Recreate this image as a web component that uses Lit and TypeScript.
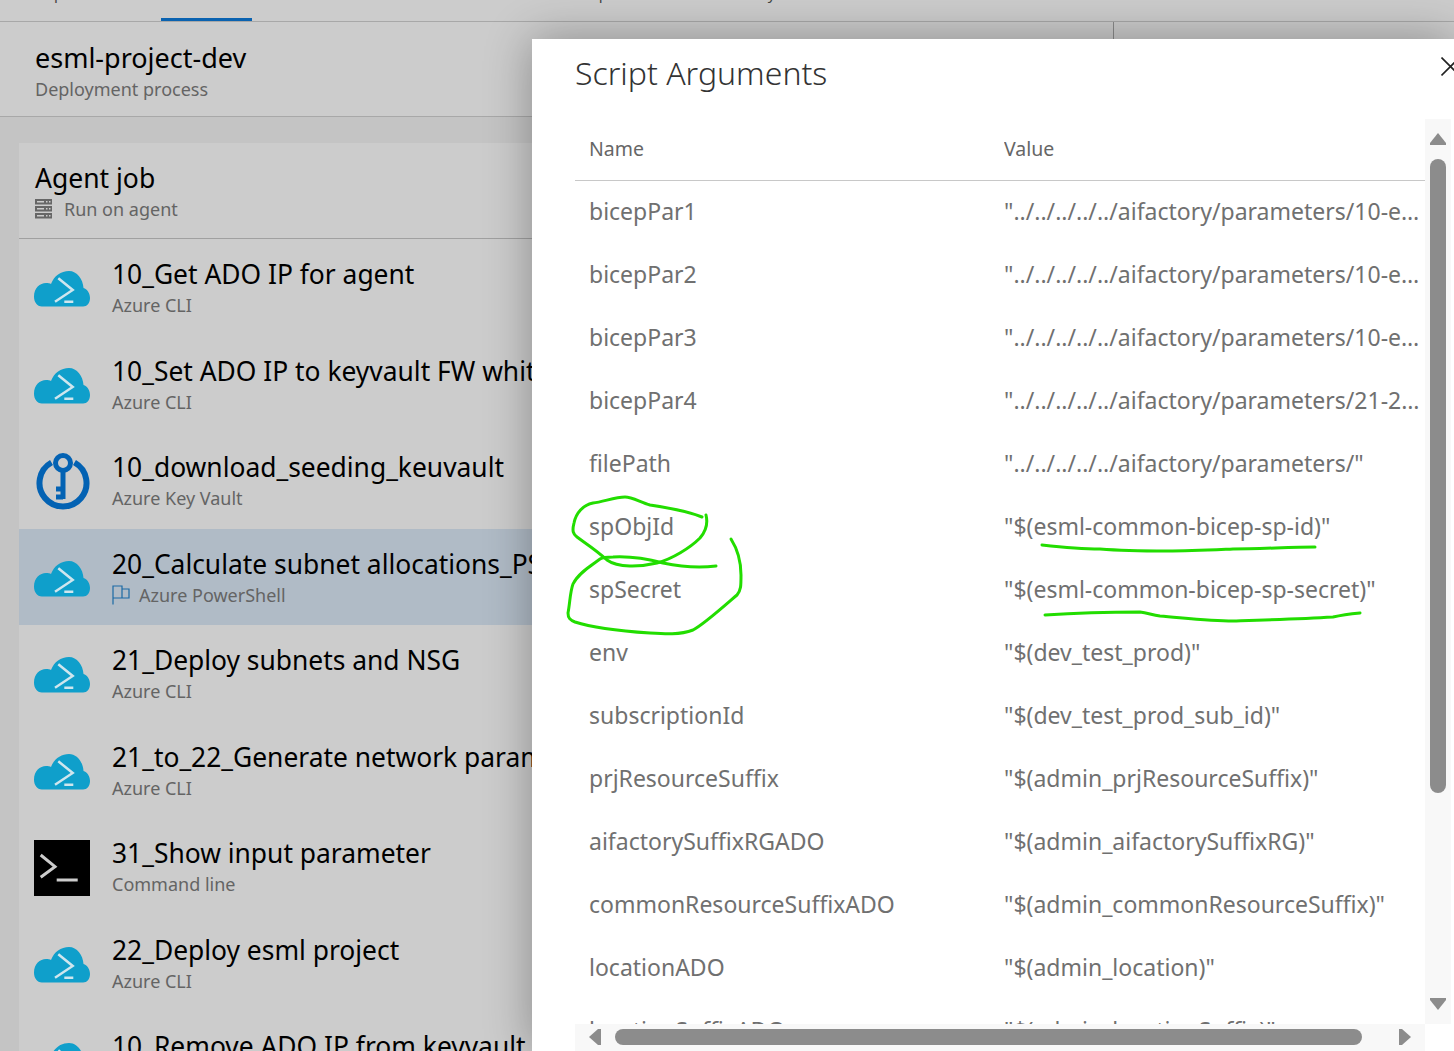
import { LitElement, css, html, svg } from "lit";
import { customElement } from "lit/decorators.js";

type Step = { name: string; kind: string; icon: "cloud" | "key" | "cmd"; selected?: boolean; flag?: boolean };

const steps: Step[] = [
  { name: "10_Get ADO IP for agent", kind: "Azure CLI", icon: "cloud" },
  { name: "10_Set ADO IP to keyvault FW whitelist", kind: "Azure CLI", icon: "cloud" },
  { name: "10_download_seeding_keuvault", kind: "Azure Key Vault", icon: "key" },
  { name: "20_Calculate subnet allocations_PS", kind: "Azure PowerShell", icon: "cloud", selected: true, flag: true },
  { name: "21_Deploy subnets and NSG", kind: "Azure CLI", icon: "cloud" },
  { name: "21_to_22_Generate network parameters", kind: "Azure CLI", icon: "cloud" },
  { name: "31_Show input parameter", kind: "Command line", icon: "cmd" },
  { name: "22_Deploy esml project", kind: "Azure CLI", icon: "cloud" },
  { name: "10_Remove ADO IP from keyvault", kind: "Azure CLI", icon: "cloud" },
];

const args: [string, string][] = [
  ["bicepPar1", '"../../../../../aifactory/parameters/10-esml-globals-1.json"'],
  ["bicepPar2", '"../../../../../aifactory/parameters/10-esml-globals-2.json"'],
  ["bicepPar3", '"../../../../../aifactory/parameters/10-esml-globals-3.json"'],
  ["bicepPar4", '"../../../../../aifactory/parameters/21-22-esml-prj-parameters.json"'],
  ["filePath", '"../../../../../aifactory/parameters/"'],
  ["spObjId", '"$(esml-common-bicep-sp-id)"'],
  ["spSecret", '"$(esml-common-bicep-sp-secret)"'],
  ["env", '"$(dev_test_prod)"'],
  ["subscriptionId", '"$(dev_test_prod_sub_id)"'],
  ["prjResourceSuffix", '"$(admin_prjResourceSuffix)"'],
  ["aifactorySuffixRGADO", '"$(admin_aifactorySuffixRG)"'],
  ["commonResourceSuffixADO", '"$(admin_commonResourceSuffix)"'],
  ["locationADO", '"$(admin_location)"'],
  ["locationSuffixADO", '"$(admin_locationSuffix)"'],
];

const cloud = html`<svg class="ico" width="56" height="36" viewBox="0 0 56 36">
  <path fill="#0f9fcb" d="M8 35.500C3 35.500 0 31 0 25.500C0 17 6 12 12 12C14 12 16 12 17 13C20 5 27 0 35 0C43 0 49 8 49.500 17C53 18 56 22 56 27C56 32 53 35.500 49 35.500Z" />
  <path fill="none" stroke="#cfe6ee" stroke-width="2.500" d="M24.300 7.300L38.700 19L21 30.700M30.300 30.700h9" />
</svg>`;

const key = html`<svg class="ico" width="56" height="58" viewBox="-3 0 56 58">
  <path fill="none" stroke="#0362b3" stroke-width="6" d="M14.500 9.500A23.500 23.500 0 1 0 37.500 9.500" />
  <circle cx="26" cy="10" r="7.500" fill="none" stroke="#0362b3" stroke-width="5" />
  <path fill="none" stroke="#0362b3" stroke-width="5" d="M26 17V46M19 36h7M19 44h7" />
</svg>`;

const cmd = html`<svg class="ico" width="56" height="56" viewBox="0 0 56 56">
  <rect width="56" height="56" fill="#000" />
  <path fill="none" stroke="#ccc" stroke-width="3" d="M6.700 15L21 26.700L6.700 37.300M22.700 40h21" />
</svg>`;

const icons = { cloud, key, cmd };

const flag = html`<svg class="flag" width="18" height="20" viewBox="0 0 18 20">
  <path fill="none" stroke="#1b6aa5" stroke-width="1.200" d="M1 19.500V1h9V13H1M10 4h7v9h-7" />
</svg>`;

const serverIcon = html`<svg class="server" width="17" height="20" viewBox="0 0 17 20">
  <path fill="#666" d="M0 0h17v5.500H0zM0 7h17v5.500H0zM0 14h17v5.500H0z" />
  <path fill="#ccc" d="M2 2h7v1.500H2zM11 2h1.500v1.500H11zM14 2h1.500v1.500H14zM2 9h7v1.500H2zM11 9h1.500v1.500H11zM14 9h1.500v1.500H14zM2 16h7v1.500H2zM11 16h1.500v1.500H11zM14 16h1.500v1.500H14z" />
</svg>`;

// hand drawn marks on top of the screenshot, page coordinates
const marks = svg`
  <path d="M702 517C690 512 670 508 650 505C640 502 632 497 625 497C615 497 603 502 593 503C583 505 576 513 574 523C572 531 573 534 577 537C585 543 595 549 607 560C618 568 640 567 657 563C672 559 690 548 700 538C706 531 708 523 706 515" />
  <path d="M716 566C700 568 682 567 663 563C648 559 632 556 613 557C607 557 603 557 600 559C592 565 578 573 573 584C570 592 570 603 568 613C568 618 570 620 575 622C590 627 620 631 650 633C665 634 680 635 693 630C703 625 722 608 737 595C741 590 741 586 741 575C741 560 738 550 731 539" />
  <path d="M1042 545C1060 547 1080 549 1100 549C1125 551 1145 551 1167 551C1190 551 1210 550 1233 549C1260 549 1290 547 1315 547" />
  <path d="M1045 615C1075 613 1110 612 1140 612C1148 613 1152 615 1160 616C1185 618 1210 621 1233 621C1265 620 1300 619 1333 617C1342 615 1350 614 1360 613" />
`;

@customElement("app-root")
export class AppRoot extends LitElement {
  static styles = css`
    :host {
      display: block;
      position: relative;
      height: 1051px;
      overflow: hidden;
      background: #c4c4c4;
      font-family: "Noto Sans", "Open Sans", sans-serif;
    }

    .tabs {
      height: 21px;
      background: #cccccc;
      border-bottom: 1px solid #a8a8a8;
      overflow: hidden;
      display: flex;
      font-size: 15px;
      color: #444;
    }
    .tab {
      margin-top: -17px;
      line-height: 20px;
      height: 38px;
      box-sizing: border-box;
      white-space: nowrap;
    }
    .tab-pipeline { margin-left: 41px; width: 120px; }
    .tab-tasks { width: 91px; text-align: center; border-bottom: 3px solid #0a62b0; }
    .tab-variables { width: 335px; }
    .tab-options { width: 138px; }

    .head {
      height: 94px;
      background: #cccccc;
      border-bottom: 1px solid #a8a8a8;
      display: flex;
    }
    .head-text {
      width: 1113px;
      box-sizing: border-box;
      padding: 18px 0 0 35px;
    }
    .split {
      width: 1px;
      height: 18px;
      background: #8a8a8a;
    }
    .head h1 {
      margin: 0 0 1px;
      font-size: 27px;
      line-height: 36px;
      font-weight: 400;
      color: #000;
    }
    .sub {
      font-size: 18px;
      line-height: 24px;
      color: #646464;
    }

    .content {
      padding: 26px 0 0 19px;
    }
    .card {
      background: #cccccc;
    }
    .job {
      height: 96px;
      box-sizing: border-box;
      padding: 17px 16px 0;
      border-bottom: 1px solid #a0a0a0;
    }
    .job h2 {
      margin: 0 0 1px;
      font-size: 26.500px;
      line-height: 36px;
      font-weight: 400;
      color: #000;
    }
    .job .meta {
      display: flex;
      align-items: center;
      gap: 12px;
    }
    .step {
      height: 96.500px;
      box-sizing: border-box;
      display: flex;
      align-items: center;
      padding-left: 15px;
      white-space: nowrap;
    }
    .step.selected {
      background: #b0bbc6;
    }
    .step-icon {
      width: 56px;
      flex: none;
      display: flex;
      justify-content: center;
      margin: 4px 22px 0 0;
    }
    .ico {
      display: block;
    }
    .step-name {
      font-size: 26.400px;
      line-height: 36px;
      color: #000;
      margin: -1px 0 1px;
    }
    .step-kind {
      display: flex;
      align-items: center;
      gap: 9px;
    }

    .panel {
      position: absolute;
      left: 532px;
      top: 39px;
      right: 0;
      bottom: 0;
      background: #fff;
      box-shadow: 0 0 44px rgba(0, 0, 0, 0.32);
    }
    .panel h3 {
      margin: 0;
      padding: 12px 0 0 43px;
      height: 80px;
      box-sizing: border-box;
      font-size: 32px;
      line-height: 44px;
      font-weight: 300;
      color: #333;
    }
    .close {
      position: absolute;
      left: 909px;
      top: 18px;
    }

    .grid-wrap {
      margin-left: 43px;
      display: grid;
      grid-template-columns: 850px 26px;
      grid-template-rows: 905px 27px;
    }
    .table {
      overflow: hidden;
    }
    .row {
      height: 63px;
      box-sizing: border-box;
      display: grid;
      grid-template-columns: 415px 1fr;
      align-items: center;
      padding: 0 0 4px 14px;
      font-size: 23px;
      color: #707070;
    }
    .row.header {
      height: 62px;
      padding-bottom: 2px;
      border-bottom: 1px solid #c8c8c8;
      font-size: 19.500px;
      color: #666;
    }
    .row span {
      white-space: nowrap;
      overflow: hidden;
      text-overflow: ellipsis;
    }

    .vbar {
      background: #f8f8f8;
      display: flex;
      flex-direction: column;
      align-items: center;
    }
    .vthumb {
      width: 16px;
      height: 634px;
      border-radius: 8px;
      background: #8c8c8c;
      margin: 14px 0 205px;
      flex: none;
    }
    .hbar {
      background: #f8f8f8;
      display: flex;
      align-items: flex-start;
      padding: 5px 0 0 14px;
    }
    .hthumb {
      width: 747px;
      height: 16px;
      border-radius: 8px;
      background: #8c8c8c;
      margin: 0 37px 0 14px;
      flex: none;
    }
    .arrow {
      flex: none;
      display: block;
      fill: #8c8c8c;
    }
    .arrow.up { margin-top: 14px; }

    .marks {
      position: absolute;
      left: 0;
      top: 0;
      pointer-events: none;
    }
    .marks path {
      fill: none;
      stroke: #22dd00;
      stroke-width: 3;
      stroke-linecap: round;
      stroke-linejoin: round;
    }
  `;

  render() {
    return html`
      <div class="tabs">
        <span class="tab tab-pipeline">Pipeline</span>
        <span class="tab tab-tasks">Tasks</span>
        <span class="tab tab-variables">Variables&nbsp;&nbsp;&nbsp;&nbsp;Retention</span>
        <span class="tab tab-options">Options</span>
        <span class="tab">History</span>
      </div>
      <div class="head">
        <div class="head-text">
          <h1>esml-project-dev</h1>
          <div class="sub">Deployment process</div>
        </div>
        <div class="split"></div>
      </div>
      <div class="content">
        <div class="card">
          <div class="job">
            <h2>Agent job</h2>
            <div class="sub meta">${serverIcon}<span>Run on agent</span></div>
          </div>
          ${steps.map(
            (s) => html`
              <div class="step ${s.selected ? "selected" : ""}">
                <div class="step-icon">${icons[s.icon]}</div>
                <div>
                  <div class="step-name">${s.name}</div>
                  <div class="sub step-kind">${s.flag ? flag : ""}<span>${s.kind}</span></div>
                </div>
              </div>
            `,
          )}
        </div>
      </div>
      <div class="panel">
        <h3>Script Arguments</h3>
        <svg class="close" width="24" height="24" viewBox="0 0 24 24">
          <path fill="none" stroke="#222" stroke-width="1.600" d="M.5 .5l18 18M18.500 .5L.5 18.500" />
        </svg>
        <div class="grid-wrap">
          <div class="table">
            <div class="row header"><span>Name</span><span>Value</span></div>
            ${args.map(([n, v]) => html`<div class="row"><span>${n}</span><span>${v}</span></div>`)}
          </div>
          <div class="vbar">
            <svg class="arrow up" width="16" height="12" viewBox="0 0 16 12"><path d="M8 0l8 10v2H0v-2z" /></svg>
            <div class="vthumb"></div>
            <svg class="arrow" width="16" height="12" viewBox="0 0 16 12"><path d="M0 0h16v2L8 12 0 2z" /></svg>
          </div>
          <div class="hbar">
            <svg class="arrow" width="12" height="16" viewBox="0 0 12 16"><path d="M12 0v16H9L0 8l9-8z" /></svg>
            <div class="hthumb"></div>
            <svg class="arrow" width="12" height="16" viewBox="0 0 12 16"><path d="M0 0v16h3l9-8-9-8z" /></svg>
          </div>
        </div>
      </div>
      <svg class="marks" width="1454" height="1051" viewBox="0 0 1454 1051">${marks}</svg>
    `;
  }
}
